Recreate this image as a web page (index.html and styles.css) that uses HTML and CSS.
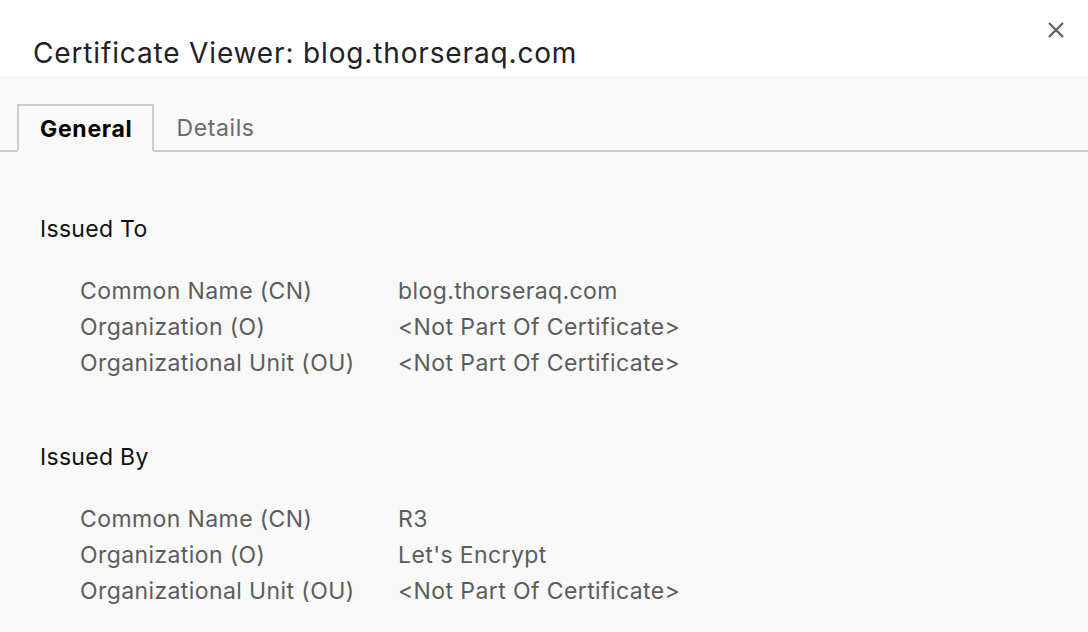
FILE: index.html
```html
<!DOCTYPE html>
<html>
<head>
<meta charset="utf-8">
<link rel="stylesheet" href="styles.css">
</head>
<body>
<div class="dialog">
  <header class="header">
    <h1 class="title">Certificate Viewer: blog.thorseraq.com</h1>
    <button class="close" aria-label="Close">
      <svg width="20" height="20" viewBox="0 0 20 20"><path d="M3 3 L17 17 M17 3 L3 17" stroke="#5f6368" stroke-width="2.4" stroke-linecap="butt"/></svg>
    </button>
  </header>
  <main class="body">
    <nav class="tabs">
      <div class="tab active">General</div>
      <div class="tab">Details</div>
      <div class="tab-fill"></div>
    </nav>
    <section class="section">
      <h2 class="section-title">Issued To</h2>
      <div class="fields">
        <div class="label">Common Name (CN)</div><div class="value">blog.thorseraq.com</div>
        <div class="label">Organization (O)</div><div class="value">&lt;Not Part Of Certificate&gt;</div>
        <div class="label">Organizational Unit (OU)</div><div class="value">&lt;Not Part Of Certificate&gt;</div>
      </div>
    </section>
    <section class="section">
      <h2 class="section-title">Issued By</h2>
      <div class="fields">
        <div class="label">Common Name (CN)</div><div class="value">R3</div>
        <div class="label">Organization (O)</div><div class="value">Let's Encrypt</div>
        <div class="label">Organizational Unit (OU)</div><div class="value">&lt;Not Part Of Certificate&gt;</div>
      </div>
    </section>
  </main>
</div>
</body>
</html>
```
FILE: styles.css
```css
* { box-sizing: border-box; }
html, body { margin: 0; padding: 0; }
body {
  width: 1088px;
  height: 632px;
  overflow: hidden;
  background: #f9f9f9;
  font-family: Inter, Roboto, "Liberation Sans", sans-serif;
}
.dialog { display: flex; flex-direction: column; height: 632px; }
.header {
  background: #ffffff;
  height: 76px;
  display: flex;
  align-items: flex-start;
  justify-content: space-between;
  padding: 0 22px 0 33px;
}
.title {
  margin: 34px 0 0 0;
  font-size: 28px;
  font-weight: 400;
  line-height: 38px;
  letter-spacing: 0.85px;
  color: #202124;
}
.close {
  margin-top: 20px;
  border: 0;
  background: none;
  padding: 0;
  width: 20px;
  height: 20px;
}
.body { flex: 1; background: #f9f9f9; }
.tabs {
  display: flex;
  align-items: flex-end;
  margin-top: 28px;
  height: 48px;
}
.tabs::before {
  content: "";
  width: 17px;
  height: 48px;
  border-bottom: 2px solid #cccccc;
}
.tab {
  height: 48px;
  display: flex;
  align-items: center;
  padding: 2px 22px 0 23px;
  font-size: 23px;
  letter-spacing: 0.6px;
  color: #6a6a6a;
  border-bottom: 2px solid #cccccc;
}
.tab.active {
  border: 2px solid #cccccc;
  border-bottom: 2px solid transparent;
  font-weight: 700;
  letter-spacing: 0.7px;
  color: #000;
  padding: 2px 19px 0 21px;
}
.tab-fill { flex: 1; height: 48px; border-bottom: 2px solid #cccccc; }
.section { padding-left: 40px; }
.section-title {
  margin: 0;
  font-size: 23px;
  font-weight: 400;
  letter-spacing: 0.3px;
  color: #111;
  line-height: 36px;
}
.section:first-of-type .section-title { margin-top: 59px; }
.section + .section .section-title { margin-top: 58px; }
.fields {
  display: grid;
  grid-template-columns: 318px auto;
  margin-top: 26px;
  padding-left: 40px;
  font-size: 23px;
  letter-spacing: 0.4px;
  line-height: 36px;
  color: #5c5c5c;
}
```
